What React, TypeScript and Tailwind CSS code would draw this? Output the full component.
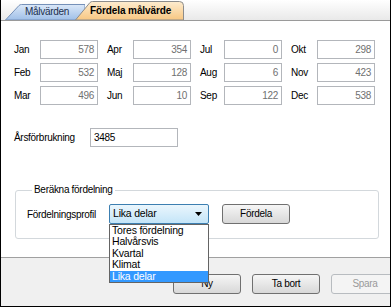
import { useState } from "react";

const months: [string, string][] = [
  ["Jan", "578"],
  ["Apr", "354"],
  ["Jul", "0"],
  ["Okt", "298"],
  ["Feb", "532"],
  ["Maj", "128"],
  ["Aug", "6"],
  ["Nov", "423"],
  ["Mar", "496"],
  ["Jun", "10"],
  ["Sep", "122"],
  ["Dec", "538"],
];

const profiles = ["Tores fördelning", "Halvårsvis", "Kvartal", "Klimat", "Lika delar"];

function WinButton({ label, disabled }: { label: string; disabled?: boolean }) {
  return (
    <button
      className={`h-[20px] w-[68px] shrink-0 rounded-[3px] border text-center leading-[18px] ${
        disabled
          ? "border-[#b8bcc0] bg-[#f4f4f4] text-[#9a9a9a]"
          : "border-[#707070] bg-linear-to-b from-[#f6f6f6] to-[#d8d8d8] text-black"
      }`}
    >
      {label}
    </button>
  );
}

export default function App() {
  const [profile] = useState("Lika delar");

  return (
    <div className="flex h-[307px] w-[391px] flex-col overflow-hidden border-x border-b border-black bg-white font-['Liberation_Sans',Arial,sans-serif] text-[10px] tracking-[-0.3px] text-black">
      {/* tab strip */}
      <div className="flex h-[21px] shrink-0 items-end border-b border-[#9a9a9a] bg-linear-to-b from-white to-[#e9e9e9] pl-[4px]">
        <div className="relative h-[16px] w-[80px]">
          <svg className="absolute inset-0" width="80" height="16" viewBox="0 0 80 16">
            <defs>
              <linearGradient id="blueTab" x1="0" y1="0" x2="0" y2="1">
                <stop offset="0" stopColor="#dbe8f8" />
                <stop offset="1" stopColor="#9fbfe8" />
              </linearGradient>
            </defs>
            <path d="M0.5 16 L14 1.5 Q15 0.5 16.5 0.5 L80 0.5 L80 16 Z" fill="url(#blueTab)" stroke="#7590b8" />
          </svg>
          <span className="relative block pl-[20px] leading-[16px] text-[#1c2f4d]">Målvärden</span>
        </div>
        <div className="relative -ml-[10px] h-[19px] w-[109px]">
          <svg className="absolute inset-0" width="109" height="19" viewBox="0 0 109 19">
            <defs>
              <linearGradient id="orangeTab" x1="0" y1="0" x2="0" y2="1">
                <stop offset="0" stopColor="#fdecd0" />
                <stop offset="1" stopColor="#f8c782" />
              </linearGradient>
            </defs>
            <path
              d="M0.5 19 L15 1.5 Q16 0.5 17.5 0.5 L104.5 0.5 Q108.5 0.5 108.5 4.5 L108.5 19 Z"
              fill="url(#orangeTab)"
              stroke="#8c8c8c"
            />
          </svg>
          <span className="relative block pl-[15px] pt-[2px] text-[10px] font-bold leading-[16px] tracking-[-0.1px]">
            Fördela målvärde
          </span>
        </div>
      </div>

      {/* content */}
      <div className="flex-1 pt-[19px] pl-[13px]">
        <div className="grid grid-cols-[84px_84px_82px_84px] gap-x-[9px] gap-y-[4px]">
          {months.map(([m, v]) => (
            <div key={m} className="flex items-center justify-between">
              <span>{m}</span>
              <div className="h-[19px] w-[58px] border border-[#b3b6bb] pr-[3px] text-right leading-[17px] text-[#707070]">
                {v}
              </div>
            </div>
          ))}
        </div>

        <div className="mt-[23px] flex items-center">
          <span className="w-[76px]">Årsförbrukning</span>
          <div className="h-[19px] w-[88px] border border-[#b3b6bb] pl-[3px] leading-[17px]">3485</div>
        </div>

        <fieldset className="mt-[37px] ml-[1px] w-[364px] rounded-[3px] border border-[#d3d8dc] pb-[14px] pl-[11px]">
          <legend className="ml-[5px] px-[2px] leading-[12px]">Beräkna fördelning</legend>
          <div className="mt-[8px] flex items-center">
            <span className="w-[82px]">Fördelningsprofil</span>
            <div className="relative">
              <div className="flex h-[20px] w-[100px] items-center justify-between rounded-[2px] border border-[#3c7fb1] bg-linear-to-b from-[#eaf6fd] to-[#c4e5f8] pr-[6px] pl-[3px] text-[10.5px] tracking-[-0.2px]">
                <span>{profile}</span>
                <svg width="7" height="4" viewBox="0 0 7 4">
                  <path d="M0 0 H7 L3.5 4 Z" fill="#000" />
                </svg>
              </div>
              <ul className="absolute top-full left-0 z-10 w-[100px] border border-[#646464] bg-white text-[10.5px] tracking-[-0.2px]">
                {profiles.map((p) => (
                  <li
                    key={p}
                    className={`h-[11.4px] pl-[2px] leading-[11px] ${
                      p === profile ? "bg-[#3399ff] text-white" : ""
                    }`}
                  >
                    {p}
                  </li>
                ))}
              </ul>
            </div>
            <div className="ml-[13px]">
              <WinButton label="Fördela" />
            </div>
          </div>
        </fieldset>
      </div>

      {/* bottom bar */}
      <div className="flex h-[49px] shrink-0 gap-[11px] border-t border-[#a0a0a0] bg-[#f0f0f0] pt-[16px] pl-[172px]">
        <WinButton label="Ny" />
        <WinButton label="Ta bort" />
        <WinButton label="Spara" disabled />
      </div>
    </div>
  );
}
